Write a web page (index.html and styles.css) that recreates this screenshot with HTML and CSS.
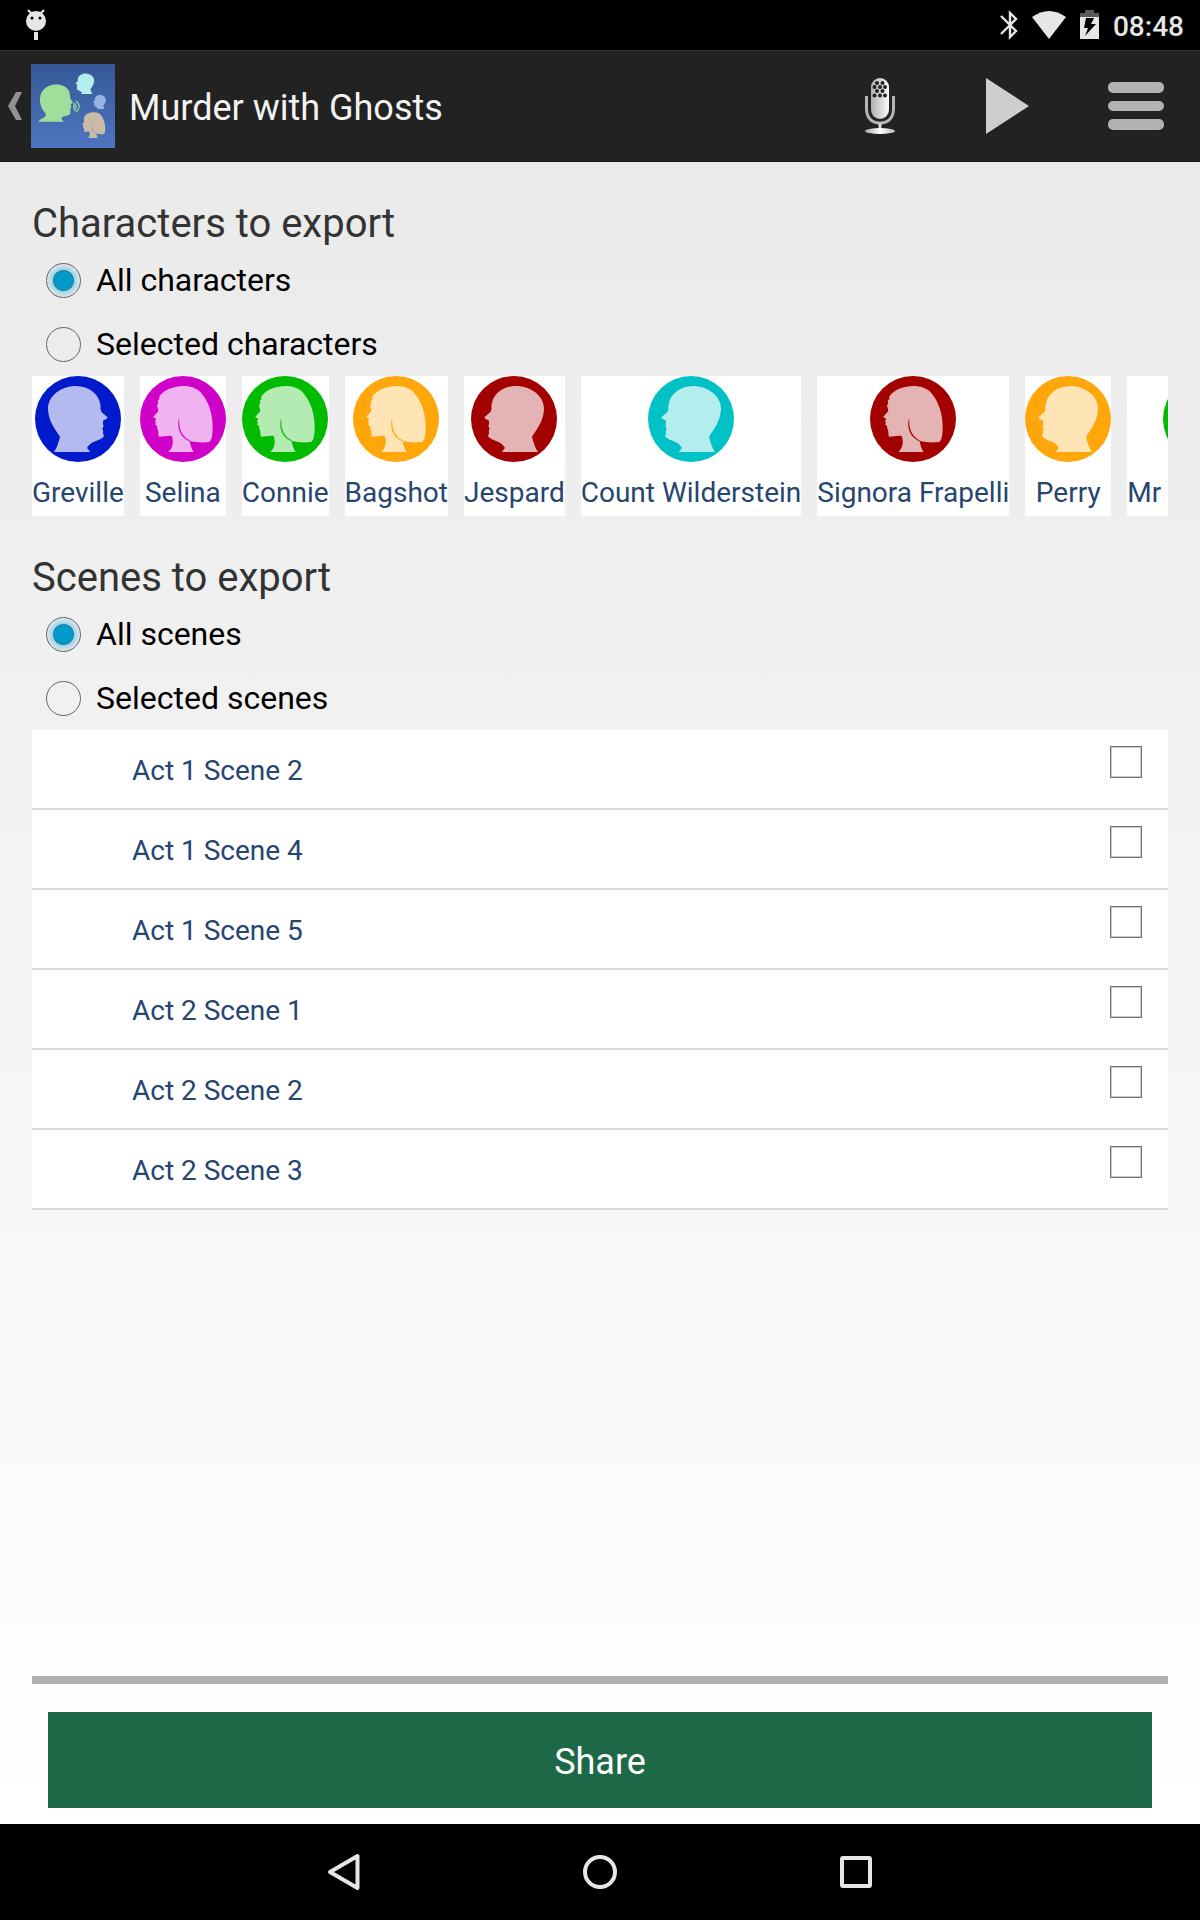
FILE: index.html
```html
<!DOCTYPE html>
<html lang="en">
<head>
    <meta charset="UTF-8">
    <meta name="viewport" content="width=device-width, initial-scale=1.0">
    <title>Murder with Ghosts</title>
    <link rel="stylesheet" href="styles.css">
</head>
<body>
    <!-- shared head shapes -->
    <svg class="defs" width="0" height="0" aria-hidden="true">
        <defs>
            <path id="head-m" d="M135 30C95 30 66 55 62 85C60 92 63 98 60 104C57 112 44 118 40 124C42 130 49 131 54 134L54 145L52 150L56 158L53 165C57 172 50 176 52 182C62 194 92 194 102 216L92 228H201Q190 212 183 182C198 158 218 135 219 98C219 60 180 30 135 30Z"/>
            <path id="head-f" d="M132 30C95 30 66 45 57 64L59 68L53 74L55 80L51 90L55 102C53 112 43 116 40 123L49 129L45 135L48 140L45 145L51 150L52 158C57 165 54 176 57 182C70 182 84 178 95 180C101 195 100 215 85 228H161C154 218 151 208 149 195C165 199 190 201 207 198C216 194 218 175 218 150C217 110 205 75 182 49C170 36 150 30 132 30Z"/>
            <path id="hair-f" d="M117 130C111 162 123 186 152 197L147 193C125 180 116 160 117 130Z" stroke-width="1"/>
            <symbol id="face-m" viewBox="0 0 258 258">
                <circle cx="129" cy="129" r="129" fill="currentColor"/>
                <use href="#head-m" fill="#fff" opacity=".7"/>
            </symbol>
            <symbol id="face-f" viewBox="0 0 258 258">
                <circle cx="129" cy="129" r="129" fill="currentColor"/>
                <use href="#head-f" fill="#fff" opacity=".7"/>
                <use href="#hair-f" fill="currentColor" stroke="currentColor"/>
            </symbol>
            <linearGradient id="sky" x1="0" y1="0" x2="0" y2="1">
                <stop offset="0" stop-color="#365896"/>
                <stop offset="1" stop-color="#4d75c0"/>
            </linearGradient>
            <linearGradient id="metal">
                <stop offset="0" stop-color="#b0b0b0"/>
                <stop offset="1" stop-color="#fafafa"/>
            </linearGradient>
            <linearGradient id="base">
                <stop offset="0" stop-color="#aaa"/>
                <stop offset=".5" stop-color="#fff"/>
                <stop offset="1" stop-color="#bbb"/>
            </linearGradient>
        </defs>
    </svg>

    <div class="status-bar">
        <svg class="debug" width="20" height="32" viewBox="0 0 20 32" fill="#e6e6e6">
            <circle cx="10" cy="12" r="10"/>
            <path d="M2 1l4 4M18 1l-4 4" stroke="#e6e6e6" stroke-width="2"/>
            <path d="M8 23h4v8h-4z"/>
            <circle cx="6" cy="9" r="1.5" fill="#000"/>
            <circle cx="14" cy="9" r="1.5" fill="#000"/>
        </svg>
        <div class="indicators">
            <svg width="18" height="30" viewBox="0 0 18 30" fill="none" stroke="#e6e6e6" stroke-width="2.4">
                <path d="M1 6l15 15-6 6V3l6 6L1 24"/>
            </svg>
            <svg width="34" height="30" viewBox="0 0 34 30" fill="#e6e6e6">
                <path d="M0 7Q17-5 34 7L17 29Z"/>
            </svg>
            <svg width="19" height="30" viewBox="0 0 19 30">
                <path d="M5 0h9v3h5v4H0V3h5z" fill="#5a5a5a"/>
                <path d="M0 7h19v22H0z" fill="#e6e6e6"/>
                <path d="M6 8h8l-3 6h5L5 26l3-8H4z" fill="#000"/>
            </svg>
            <span class="clock">08:48</span>
        </div>
    </div>

    <header class="action-bar">
        <a class="home" href="#" aria-label="Back">
            <svg width="14" height="28" viewBox="0 0 14 28" fill="#929292">
                <path d="M8 0h6L7 14l7 14H8L0 14z"/>
            </svg>
            <svg width="84" height="84" viewBox="0 0 252 252">
                <rect width="252" height="252" fill="url(#sky)"/>
                <path d="M22 173C30 160 47 162 44 149C24 128 21 95 37 78C52 61 78 58 98 66C112 73 117 84 117 98C117 105 124 110 126 117L119 121L121 131L117 136L119 141L117 151C108 158 92 155 92 164C92 169 96 168 98 173Z" fill="#9edf9c"/>
                <g fill="none" stroke="#8fd4a0" stroke-width="4">
                    <path d="M127 122Q133 128 127 135"/>
                    <path d="M129 116Q142 128 129 140"/>
                    <path d="M136 111Q154 128 134 145"/>
                </g>
                <use href="#head-m" fill="#b2eeee" transform="translate(121 19) scale(.313)"/>
                <use href="#head-m" fill="#98b2e2" transform="translate(178 87) scale(.212)"/>
                <use href="#head-f" fill="#c9bba8" transform="translate(138 133) scale(.389)"/>
                <use href="#hair-f" fill="#8d93a6" stroke="#8d93a6" transform="translate(138 133) scale(.389)"/>
            </svg>
        </a>
        <h1>Murder with Ghosts</h1>
        <button class="action" type="button" aria-label="Record">
            <svg width="32" height="56" viewBox="0 0 32 56">
                <rect x="7" y="0" width="18" height="41" rx="9" fill="url(#metal)"/>
                <g fill="#222">
                    <circle cx="13" cy="5" r="2"/><circle cx="18.500" cy="5" r="2"/>
                    <circle cx="10.500" cy="9" r="2"/><circle cx="16" cy="9" r="2"/><circle cx="21" cy="9" r="2"/>
                    <circle cx="13" cy="13" r="2"/><circle cx="18.500" cy="13" r="2"/>
                    <circle cx="10.500" cy="17.500" r="2"/><circle cx="16" cy="17.500" r="2"/><circle cx="21" cy="17.500" r="2"/>
                </g>
                <path d="M2.500 18V31C2.500 40 8 45 16 45S29.500 40 29.500 31V18" fill="none" stroke="#b5b5b5" stroke-width="3"/>
                <path d="M14.500 45h3v7h-3z" fill="#ddd"/>
                <ellipse cx="16" cy="53" rx="15" ry="3" fill="url(#base)"/>
            </svg>
        </button>
        <button class="action" type="button" aria-label="Play">
            <svg width="44" height="56" viewBox="0 0 44 56"><path d="M0 0L43 28L0 56Z" fill="#cecece"/></svg>
        </button>
        <button class="action" type="button" aria-label="Menu">
            <svg width="56" height="48" viewBox="0 0 56 48" fill="#b2b2b2">
                <rect y="0" width="56" height="11" rx="5"/>
                <rect y="19" width="56" height="10" rx="5"/>
                <rect y="37" width="56" height="11" rx="5"/>
            </svg>
        </button>
    </header>

    <main>
        <section>
            <h2>Characters to export</h2>
            <label class="option"><input type="radio" name="characters" checked>All characters</label>
            <label class="option"><input type="radio" name="characters">Selected characters</label>
            <div class="characters">
                <button class="character" type="button"><svg class="blue flip"><use href="#face-m"/></svg>Greville</button>
                <button class="character" type="button"><svg class="magenta"><use href="#face-f"/></svg>Selina</button>
                <button class="character" type="button"><svg class="green"><use href="#face-f"/></svg>Connie</button>
                <button class="character" type="button"><svg class="orange"><use href="#face-f"/></svg>Bagshot</button>
                <button class="character" type="button"><svg class="red"><use href="#face-m"/></svg>Jespard</button>
                <button class="character" type="button"><svg class="cyan"><use href="#face-m"/></svg>Count Wilderstein</button>
                <button class="character" type="button"><svg class="red"><use href="#face-f"/></svg>Signora Frapelli</button>
                <button class="character" type="button"><svg class="orange"><use href="#face-m"/></svg>Perry</button>
                <button class="character" type="button"><svg class="green"><use href="#face-m"/></svg>Mr Frobisher</button>
            </div>
        </section>

        <section>
            <h2>Scenes to export</h2>
            <label class="option"><input type="radio" name="scenes" checked>All scenes</label>
            <label class="option"><input type="radio" name="scenes">Selected scenes</label>
            <ul class="scenes">
                <li><label>Act 1 Scene 2<input type="checkbox"></label></li>
                <li><label>Act 1 Scene 4<input type="checkbox"></label></li>
                <li><label>Act 1 Scene 5<input type="checkbox"></label></li>
                <li><label>Act 2 Scene 1<input type="checkbox"></label></li>
                <li><label>Act 2 Scene 2<input type="checkbox"></label></li>
                <li><label>Act 2 Scene 3<input type="checkbox"></label></li>
            </ul>
        </section>

        <div class="footer">
            <button class="share" type="button">Share</button>
        </div>
    </main>

    <nav class="nav-bar">
        <button type="button" aria-label="Back">
            <svg width="36" height="40" viewBox="0 0 36 40"><path d="M31.500 4V36L4 20Z"/></svg>
        </button>
        <button type="button" aria-label="Home">
            <svg width="36" height="36" viewBox="0 0 36 36"><circle cx="18" cy="18" r="15"/></svg>
        </button>
        <button type="button" aria-label="Recent apps">
            <svg width="32" height="32" viewBox="0 0 32 32"><rect x="2" y="2" width="28" height="28" rx="1"/></svg>
        </button>
    </nav>
</body>
</html>
```
FILE: styles.css
```css
* {
    box-sizing: border-box;
}
body {
    font-family: Roboto, sans-serif;
    margin: 0;
    min-height: 100vh;
    display: flex;
    flex-direction: column;
    background: #000;
}
h1, h2 {
    margin: 0;
    font-weight: 400;
}
button {
    font-family: inherit;
    border: none;
    padding: 0;
    background: none;
    cursor: pointer;
}
svg {
    display: block;
    flex: none;
}
.defs {
    position: absolute;
}

/* status bar */
.status-bar {
    height: 50px;
    padding: 0 16px 0 26px;
    display: flex;
    justify-content: space-between;
    align-items: center;
}
.indicators {
    display: flex;
    align-items: center;
    gap: 14px;
}
.clock {
    padding-top: 4px;
    color: #e6e6e6;
    font-size: 28px;
    font-weight: 500;
    line-height: 32px;
}

/* action bar */
.action-bar {
    height: 112px;
    padding-left: 8px;
    display: flex;
    align-items: center;
    background: #222;
    border-top: 1px solid #333;
    border-bottom: 1px solid #181818;
}
.home {
    display: flex;
    align-items: center;
    gap: 9px;
}
.action-bar h1 {
    flex: 1;
    margin-left: 14px;
    padding-top: 4px;
    font-size: 36px;
    line-height: 44px;
    color: #f3f3f3;
}
.action {
    width: 128px;
    height: 110px;
    display: flex;
    justify-content: center;
    align-items: center;
}

/* content */
main {
    flex: 1;
    display: flex;
    flex-direction: column;
    padding: 0 32px 16px;
    background: linear-gradient(#eaeaea, #fff);
}
section {
    padding-top: 38px;
}
h2 {
    font-size: 40px;
    line-height: 48px;
    color: #333;
}
.option {
    display: flex;
    align-items: center;
    gap: 15px;
    height: 64px;
    padding-left: 14px;
    font-size: 32px;
    color: #000;
}
input {
    appearance: none;
    flex: none;
    margin: 0;
}
.option input {
    width: 35px;
    height: 35px;
    border: 1px solid #666;
    border-radius: 50%;
}
.option input:checked {
    background: radial-gradient(circle, #0099cc 9px, #2f7f9c 10px, #9fd3e6 11px, #d9e6eb 16px);
}
.characters {
    display: flex;
    gap: 16px;
    overflow: hidden;
}
.character {
    flex: none;
    display: flex;
    flex-direction: column;
    align-items: center;
    gap: 14px;
    padding-bottom: 7px;
    background: #fff;
    color: #26456f;
    font-size: 28px;
    line-height: 33px;
}
.character svg {
    width: 86px;
    height: 86px;
}
.flip {
    transform: scaleX(-1);
}
.blue { color: #001acc; }
.magenta { color: #cf00c8; }
.green { color: #00bb00; }
.orange { color: #ffa60a; }
.red { color: #a30000; }
.cyan { color: #00c1c6; }

.scenes {
    list-style: none;
    margin: 0;
    padding: 0;
}
.scenes li {
    background: #fff;
    border-bottom: 2px solid #d9d9d9;
}
.scenes label {
    display: flex;
    justify-content: space-between;
    padding: 16px 26px 12px 100px;
    color: #26456f;
    font-size: 28px;
    line-height: 50px;
}
.scenes input {
    width: 32px;
    height: 32px;
    border: 1px solid #707070;
    box-shadow: inset 0 0 0 1px #ccc;
}

.footer {
    margin-top: auto;
    padding: 28px 16px 0;
    border-top: 8px solid #b0b0b0;
}
.share {
    width: 100%;
    height: 96px;
    padding-top: 4px;
    background: #1d6846;
    color: #fff;
    font-size: 36px;
}

/* system navigation */
.nav-bar {
    height: 96px;
    display: flex;
    justify-content: center;
}
.nav-bar button {
    width: 256px;
    display: flex;
    justify-content: center;
    align-items: center;
}
.nav-bar svg {
    fill: none;
    stroke: #e6e6e6;
    stroke-width: 4px;
    stroke-linejoin: round;
}
```
